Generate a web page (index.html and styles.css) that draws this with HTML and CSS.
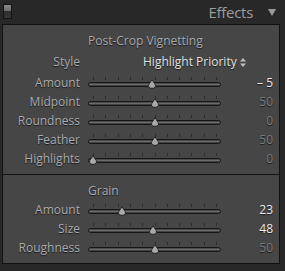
FILE: index.html
```html
<!DOCTYPE html>
<html>
<head>
<meta charset="utf-8">
<link rel="stylesheet" href="styles.css">
</head>
<body>
<div class="header">
  <div class="solo-icon"></div>
  <div class="header-right">
    <span class="header-title">Effects</span>
    <svg class="disclosure" width="8" height="7" viewBox="0 0 8 7"><path d="M0 0 H8 L4 7 Z" fill="#9a9a9a"/></svg>
  </div>
</div>
<div class="panel">
  <div class="section">
    <div class="row"><div></div><div class="title">Post-Crop Vignetting</div></div>
    <div class="row gap2">
      <div class="label">Style</div>
      <div class="style-value">Highlight Priority
        <svg class="updown" width="6" height="9" viewBox="0 0 6 9"><path d="M3 0 L6 3.5 H0 Z M3 9 L6 5.5 H0 Z" fill="#bdbdbd"/></svg>
      </div>
    </div>
    <div class="row gap2">
      <div class="label">Amount</div>
      <div class="slider"><div class="ticks"></div><div class="track"></div><svg class="thumb" style="left:59px" width="10" height="10" viewBox="0 0 10 10"><path d="M5 0.8 L8.2 5.5 Q9.5 9.3 5 9.3 Q0.5 9.3 1.8 5.5 Z"/></svg></div>
      <div class="value bright">– 5</div>
    </div>
    <div class="row">
      <div class="label">Midpoint</div>
      <div class="slider"><div class="ticks"></div><div class="track"></div><svg class="thumb" style="left:62px" width="10" height="10" viewBox="0 0 10 10"><path d="M5 0.8 L8.2 5.5 Q9.5 9.3 5 9.3 Q0.5 9.3 1.8 5.5 Z"/></svg></div>
      <div class="value">50</div>
    </div>
    <div class="row">
      <div class="label">Roundness</div>
      <div class="slider"><div class="ticks"></div><div class="track"></div><svg class="thumb" style="left:62px" width="10" height="10" viewBox="0 0 10 10"><path d="M5 0.8 L8.2 5.5 Q9.5 9.3 5 9.3 Q0.5 9.3 1.8 5.5 Z"/></svg></div>
      <div class="value">0</div>
    </div>
    <div class="row">
      <div class="label">Feather</div>
      <div class="slider"><div class="ticks"></div><div class="track"></div><svg class="thumb" style="left:62px" width="10" height="10" viewBox="0 0 10 10"><path d="M5 0.8 L8.2 5.5 Q9.5 9.3 5 9.3 Q0.5 9.3 1.8 5.5 Z"/></svg></div>
      <div class="value">50</div>
    </div>
    <div class="row">
      <div class="label">Highlights</div>
      <div class="slider"><div class="ticks"></div><div class="track"></div><svg class="thumb" style="left:0px" width="10" height="10" viewBox="0 0 10 10"><path d="M5 0.8 L8.2 5.5 Q9.5 9.3 5 9.3 Q0.5 9.3 1.8 5.5 Z"/></svg></div>
      <div class="value">0</div>
    </div>
  </div>
  <div class="section second">
    <div class="row"><div></div><div class="title">Grain</div></div>
    <div class="row">
      <div class="label">Amount</div>
      <div class="slider"><div class="ticks"></div><div class="track"></div><svg class="thumb" style="left:29px" width="10" height="10" viewBox="0 0 10 10"><path d="M5 0.8 L8.2 5.5 Q9.5 9.3 5 9.3 Q0.5 9.3 1.8 5.5 Z"/></svg></div>
      <div class="value bright">23</div>
    </div>
    <div class="row">
      <div class="label">Size</div>
      <div class="slider"><div class="ticks"></div><div class="track"></div><svg class="thumb" style="left:60px" width="10" height="10" viewBox="0 0 10 10"><path d="M5 0.8 L8.2 5.5 Q9.5 9.3 5 9.3 Q0.5 9.3 1.8 5.5 Z"/></svg></div>
      <div class="value bright">48</div>
    </div>
    <div class="row">
      <div class="label">Roughness</div>
      <div class="slider"><div class="ticks"></div><div class="track"></div><svg class="thumb" style="left:62px" width="10" height="10" viewBox="0 0 10 10"><path d="M5 0.8 L8.2 5.5 Q9.5 9.3 5 9.3 Q0.5 9.3 1.8 5.5 Z"/></svg></div>
      <div class="value">50</div>
    </div>
  </div>
</div>
</body>
</html>
```
FILE: styles.css
```css
html, body {
  margin: 0;
  padding: 0;
  background: #282828;
  width: 285px;
  height: 271px;
  overflow: hidden;
  font-family: "Open Sans", "Liberation Sans", sans-serif;
}
.header {
  height: 24px;
  display: flex;
  align-items: flex-start;
  justify-content: space-between;
  padding: 0 9px 0 3px;
}
.solo-icon {
  margin-top: 4px;
  width: 7px;
  height: 13px;
  border: 1px solid #141414;
  background: linear-gradient(#8a8a8a 0, #6a6a6a 6px, #2e2e2e 6px, #363636 100%);
}
.header-right {
  display: flex;
  align-items: center;
  height: 24px;
  gap: 15px;
}
.header-title {
  font-size: 15px;
  color: #9c9c9c;
  letter-spacing: -0.3px;
  line-height: 24px;
  margin-top: -1px;
}
.disclosure {
  margin-top: 0px;
}
.panel {
  margin: 0 5px 0 2px;
  border: 1px solid #121212;
  background: #464646;
  height: 238px;
}
.section {
  padding: 6px 0 6px 0;
}
.section.second {
  border-top: 1px solid #141414;
  padding: 6px 0 5px 0;
}
.row {
  display: grid;
  grid-template-columns: 77px 133px 44px;
  column-gap: 8px;
  height: 19px;
  align-items: center;
}
.row.gap2 {
  margin-top: 2px;
}
.label, .title, .value, .style-value {
  font-size: 12px;
  line-height: 19px;
  text-shadow: 0 1px 1px #1a1a1a;
  white-space: nowrap;
}
.label {
  text-align: right;
  color: #a9aab0;
}
.title {
  color: #a9aab0;
  grid-column: 2 / 4;
}
.style-value {
  grid-column: 2 / 4;
  padding-left: 55px;
  color: #e2e2e2;
  display: flex;
  align-items: center;
  gap: 3px;
}
.updown {
  margin-top: 1px;
}
.value {
  text-align: right;
  color: #7b7b7b;
  padding-right: 0;
  margin-left: -8px;
}
.value.bright {
  color: #ececec;
}
.slider {
  position: relative;
  height: 19px;
}
.ticks {
  position: absolute;
  left: 5px;
  top: 4px;
  width: 125px;
  height: 3px;
  background: repeating-linear-gradient(90deg, #2c2c2c 0, #2c2c2c 1px, transparent 1px, transparent 12.3px);
}
.track {
  position: absolute;
  left: 0;
  right: 0;
  top: 9px;
  height: 3px;
  border: 1px solid #161616;
  border-radius: 3px;
  background: linear-gradient(#3c3c3c, #6a6a6a 50%, #2e2e2e);
}
.thumb {
  position: absolute;
  top: 6px;
}
.thumb path {
  fill: #a9a9a9;
  stroke: #202020;
  stroke-width: 0.9;
}
```
